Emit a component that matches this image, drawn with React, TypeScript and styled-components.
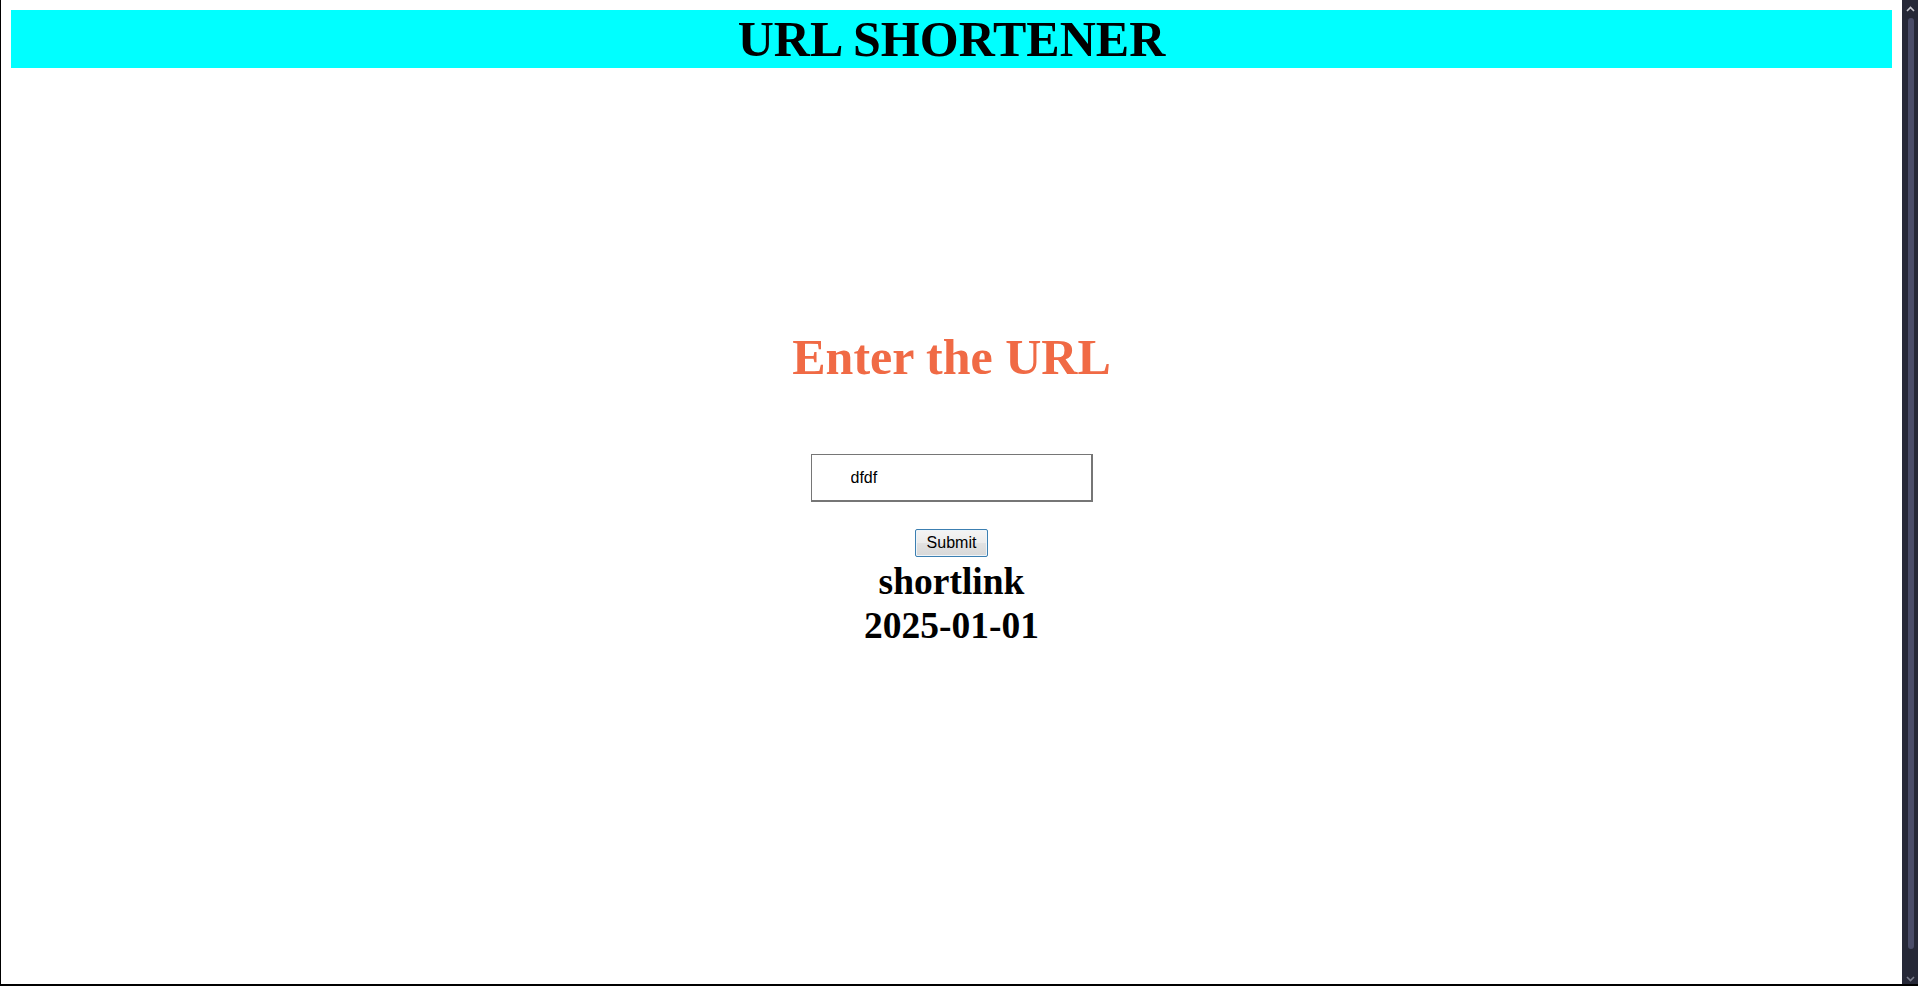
import React from "react";
import styled, { createGlobalStyle } from "styled-components";

const GlobalStyle = createGlobalStyle`
  html, body {
    margin: 0;
    padding: 0;
    background: #ffffff;
    overflow: hidden;
  }
  * { box-sizing: border-box; }
`;

const Frame = styled.div`
  display: flex;
  height: 986px;
  border-left: 1px solid #000000;
  border-bottom: 2px solid #000000;
  background: #ffffff;
`;

const Main = styled.main`
  flex: 1;
  display: flex;
  flex-direction: column;
  align-items: center;
  padding: 10px;
  font-family: "Liberation Serif", "Times New Roman", serif;
`;

const Header = styled.header`
  align-self: stretch;
  height: 58px;
  background: #00ffff;
  display: flex;
  align-items: center;
  justify-content: center;
`;

const HeaderTitle = styled.h1`
  margin: 0;
  font-size: 50px;
  line-height: 58px;
  font-weight: bold;
  color: #000000;
`;

const Prompt = styled.h2`
  margin: 264px 0 0;
  font-size: 50px;
  line-height: 50px;
  font-weight: bold;
  color: #f06a45;
`;

const UrlInput = styled.input`
  margin-top: 72px;
  width: 282px;
  height: 48px;
  padding: 0 0 0 39px;
  border-style: solid;
  border-color: #767676;
  border-width: 1px 2px 2px 1px;
  border-radius: 0;
  font-family: "Liberation Sans", Arial, sans-serif;
  font-size: 16px;
  color: #000000;
  background: #ffffff;
  outline: none;
`;

const SubmitButton = styled.button`
  margin-top: 27px;
  width: 73px;
  height: 28px;
  padding: 0;
  border: 1px solid #3c7fb1;
  border-radius: 2px;
  box-shadow: inset 0 0 0 1px #eef5fa;
  background: linear-gradient(#f4f4f4 0%, #ececec 50%, #e2e2e2 51%, #d8d8d8 100%);
  font-family: "Liberation Sans", Arial, sans-serif;
  font-size: 16px;
  color: #000000;
  cursor: pointer;
`;

const Result = styled.h3<{ $first?: boolean }>`
  margin: ${(p) => (p.$first ? "3px" : "0")} 0 0;
  font-size: 37.5px;
  line-height: 44px;
  font-weight: bold;
  color: #000000;
`;

const ScrollTrack = styled.div`
  width: 16px;
  background: #262837;
  display: flex;
  flex-direction: column;
  align-items: center;
`;

const ArrowBox = styled.div<{ $h: number; $align: string }>`
  height: ${(p) => p.$h}px;
  width: 100%;
  display: flex;
  justify-content: center;
  align-items: ${(p) => p.$align};
  padding: ${(p) => (p.$align === "flex-end" ? "0 0 2px" : "6px 0 0")};
`;

const Thumb = styled.div`
  flex: 1;
  width: 6px;
  margin-left: 1px;
  border-radius: 3px;
  background: #4a4c68;
`;

const Chevron = ({ up, color }: { up?: boolean; color: string }) => (
  <svg width="9" height="6" viewBox="0 0 9 6">
    <path
      d={up ? "M1 5 L4.5 1.5 L8 5" : "M1 1 L4.5 4.5 L8 1"}
      fill="none"
      stroke={color}
      strokeWidth="1.6"
    />
  </svg>
);

export default function App() {
  return (
    <>
      <GlobalStyle />
      <Frame>
        <Main>
          <Header>
            <HeaderTitle>URL SHORTENER</HeaderTitle>
          </Header>
          <Prompt>Enter the URL</Prompt>
          <UrlInput type="text" defaultValue="dfdf" />
          <SubmitButton type="button">Submit</SubmitButton>
          <Result $first>shortlink</Result>
          <Result>2025-01-01</Result>
        </Main>
        <ScrollTrack>
          <ArrowBox $h={18} $align="flex-start">
            <Chevron up color="#c8c8d0" />
          </ArrowBox>
          <Thumb />
          <ArrowBox $h={35} $align="flex-end">
            <Chevron color="#7a7c8c" />
          </ArrowBox>
        </ScrollTrack>
      </Frame>
    </>
  );
}
